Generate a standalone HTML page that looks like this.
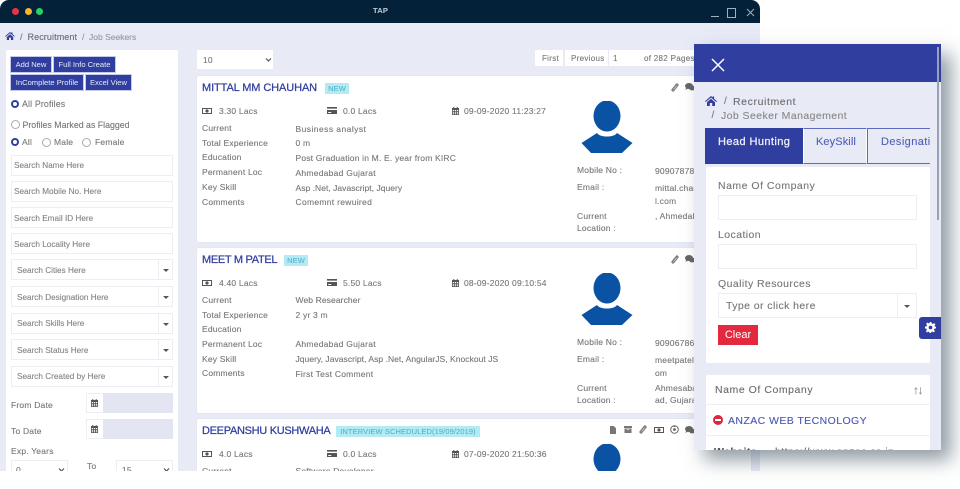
<!DOCTYPE html>
<html><head><meta charset="utf-8"><title>TAP</title>
<style>
html,body{margin:0;padding:0;background:#fff;width:960px;height:489px;overflow:hidden;font-family:"Liberation Sans",sans-serif}
body{filter:blur(.3px)}
.a,.t,.b,svg{position:absolute}
.t{white-space:nowrap;line-height:12px;height:12px;margin-top:-6px;font-size:8.5px;letter-spacing:.2px;color:#777;-webkit-text-stroke:.12px currentColor}
.ph{font-size:8.2px;letter-spacing:0;color:#858585;margin-top:-5.5px}
.d{color:#6d6d6d}
.win{left:0;top:0;width:760px;height:471px;background:#e8eaf6;border-radius:9px 9px 0 0;overflow:hidden}
.bar{left:0;top:0;width:760px;height:23px;background:#03223a}
.btn{background:#303f9f;color:#e8eaf6;font-size:7.6px;text-align:center;line-height:15px;height:15px;position:absolute;white-space:nowrap;box-shadow:0 0 0 1px #c5cae9}
.w{background:#fff;position:absolute}
.in{background:#fff;position:absolute;border:1px solid #eceef4;box-sizing:border-box}
.card{background:#fff;position:absolute;left:197px;width:554px;border-radius:2px;box-shadow:0 0 1px #ccd}
.n{color:#303f9f;font-size:11px;letter-spacing:-.1px;-webkit-text-stroke:.25px #303f9f}
.bd{background:#b2ebf2;position:absolute;height:11px;color:#4fa8cc;font-size:7.5px;line-height:12px;text-align:center;letter-spacing:.1px;white-space:nowrap}
.r{position:absolute;width:7px;height:7px;border-radius:50%;border:1px solid #aaa;background:#fff;box-sizing:content-box}
.r.on{border:2px solid #303f9f;width:4px;height:4px}
.panel{left:694px;top:44px;width:247px;height:406px;background:#e8eaf6;box-shadow:10px 10px 18px rgba(55,75,90,.55);overflow:hidden}
.l{font-size:10.5px;letter-spacing:.42px;color:#777}
.caret{position:absolute;width:0;height:0;border-left:3px solid transparent;border-right:3px solid transparent;border-top:3px solid #555}
</style></head><body>
<svg width="0" height="0" style="position:absolute"><defs>
<symbol id="home" viewBox="0 0 12 10"><path fill="#303f9f" d="M6 0 L7.600 1.400V.5h1.500v2.200L12 5.200l-.7.8L6 1.600.7 6 0 5.200zM2 6.200 6 2.800l4 3.400V10H7.200V7H4.800v3H2z"/></symbol>
<symbol id="cash" viewBox="0 0 10 6"><path fill="#555" fill-rule="evenodd" d="M0 0h10v6H0zM1 1v4h8V1zM5 1.400a1.600 1.600 0 1 1 0 3.200 1.600 1.600 0 0 1 0-3.200z"/></symbol>
<symbol id="ccard" viewBox="0 0 10 7"><path fill="#555" d="M0 0h10v1.600H0zM0 3h10v4H0zM1.200 5v1h3V5z"/></symbol>
<symbol id="cal" viewBox="0 0 7 8"><path fill="#555" d="M0 1h1.300V0h1v1h2.400V0h1v1H7v7H0zM.8 3v1h1.200V3zm2 0v1h1.400V3zm2.200 0v1h1.200V3zM.8 4.700v1h1.200v-1zm2 0v1h1.400v-1zm2.200 0v1h1.200v-1zM.8 6.300v1h1.200v-1zm2 0v1h1.400v-1zm2.200 0v1h1.200v-1z"/></symbol>
<symbol id="clip" viewBox="0 0 8 9"><path fill="none" stroke="#808080" stroke-width="3.200" stroke-linecap="round" d="M2 7 6 2"/><path fill="none" stroke="#ddd" stroke-width=".6" d="M2.600 6.400 5.600 2.800"/></symbol>
<symbol id="chat" viewBox="0 0 10 8"><ellipse cx="4" cy="3" rx="4" ry="3" fill="#666"/><ellipse cx="7" cy="5" rx="3" ry="2.400" fill="#666"/><path fill="#666" d="M1 5 .5 7 3 5.500zM8 6.500 9.500 8 9 6z"/></symbol>
<symbol id="file" viewBox="0 0 6 8"><path fill="#777" d="M0 0h3.800L6 2.200V8H0z"/></symbol>
<symbol id="box" viewBox="0 0 8 7"><path fill="#777" fill-rule="evenodd" d="M0 0h8v2H0zM.5 2.500h7V7h-7zM2.800 3.400v.7h2.400v-.7z"/></symbol>
<symbol id="ball" viewBox="0 0 9 9"><circle cx="4.500" cy="4.500" r="3.800" fill="#fff" stroke="#666" stroke-width="1"/><circle cx="4.500" cy="4.500" r="1.400" fill="#666"/><path fill="#666" d="M3.600 1h1.800v1H3.600zM1 5l1 1.600-.8.3zM8 5 7 6.600l.8.3z"/></symbol>
<symbol id="av" viewBox="0 0 52 52"><ellipse cx="26" cy="15" rx="13.500" ry="15.500" fill="#0a52a3"/><path fill="#0a52a3" d="M.5 42 16 32c2 2.800 6 3.500 10 3.500s8-.7 10-3.500l15.500 10L41 52H10z"/></symbol>
</defs></svg>

<div class="a win">
 <div class="a bar"></div>
 <div class="a" style="left:12px;top:8px;width:7px;height:7px;border-radius:50%;background:#e0364c"></div>
 <div class="a" style="left:25px;top:8px;width:7px;height:7px;border-radius:50%;background:#f6b52e"></div>
 <div class="a" style="left:36px;top:8px;width:7px;height:7px;border-radius:50%;background:#2bd160"></div>
 <div class="t" style="left:373px;top:11px;font-size:7.500px;color:#b8c2cc;font-weight:bold">TAP</div>
 <div class="a" style="left:711px;top:16px;width:8px;height:1px;background:#9fb0bb"></div>
 <div class="a" style="left:727px;top:8px;width:7px;height:8px;border:1px solid #9fb0bb"></div>
 <svg style="left:746px;top:8px" width="9" height="9"><path d="M1 1l7 7M8 1L1 8" stroke="#9fb0bb" stroke-width="1"/></svg>

 <svg style="left:5px;top:32px" width="10" height="8"><use href="#home"/></svg>
 <div class="t" style="left:20px;top:36.500px;font-size:9px">/</div>
 <div class="t d" style="left:27.500px;top:36.500px;font-size:9px;letter-spacing:.1px">Recruitment</div>
 <div class="t" style="left:82px;top:36.500px;font-size:9px;color:#999">/</div>
 <div class="t" style="left:89px;top:36.500px;font-size:8.500px;color:#999;letter-spacing:0">Job Seekers</div>

 <!-- sidebar -->
 <div class="w" style="left:6px;top:50px;width:172px;height:430px;border-radius:2px"></div>
 <div class="btn" style="left:11px;top:57px;width:40px">Add New</div>
 <div class="btn" style="left:54px;top:57px;width:61px">Full Info Create</div>
 <div class="btn" style="left:11px;top:75px;width:72px">InComplete Profile</div>
 <div class="btn" style="left:86px;top:75px;width:45px">Excel View</div>

 <div class="r on" style="left:11px;top:100px"></div><div class="t" style="left:22px;top:104px;letter-spacing:.15px;font-size:8.800px">All Profiles</div>
 <div class="r" style="left:11px;top:120px"></div><div class="t" style="left:22.500px;top:124.500px;letter-spacing:0;font-size:8.800px">Profiles Marked as Flagged</div>
 <div class="r on" style="left:11px;top:138px"></div><div class="t" style="left:22px;top:142px">All</div>
 <div class="r" style="left:42px;top:138px"></div><div class="t" style="left:54px;top:142px">Male</div>
 <div class="r" style="left:82px;top:138px"></div><div class="t" style="left:95px;top:142px">Female</div>

 <div class="in" style="left:11px;top:155px;width:162px;height:20.500px"></div><div class="t ph" style="left:14px;top:165.500px">Search Name Here</div>
 <div class="in" style="left:11px;top:181px;width:162px;height:20.500px"></div><div class="t ph" style="left:14px;top:191.500px">Search Mobile No. Here</div>
 <div class="in" style="left:11px;top:207px;width:162px;height:20.500px"></div><div class="t ph" style="left:14px;top:218px">Search Email ID Here</div>
 <div class="in" style="left:11px;top:233px;width:162px;height:20.500px"></div><div class="t ph" style="left:14px;top:244px">Search Locality Here</div>

 <div class="in" style="left:11px;top:259px;width:162px;height:21px"></div><div class="a" style="left:158px;top:260px;width:1px;height:19px;background:#eceef4"></div><div class="caret" style="left:162.500px;top:269px"></div><div class="t ph" style="left:17px;top:270px">Search Cities Here</div>
 <div class="in" style="left:11px;top:286px;width:162px;height:21px"></div><div class="a" style="left:158px;top:287px;width:1px;height:19px;background:#eceef4"></div><div class="caret" style="left:162.500px;top:296px"></div><div class="t ph" style="left:17px;top:297px">Search Designation Here</div>
 <div class="in" style="left:11px;top:313px;width:162px;height:21px"></div><div class="a" style="left:158px;top:314px;width:1px;height:19px;background:#eceef4"></div><div class="caret" style="left:162.500px;top:323px"></div><div class="t ph" style="left:17px;top:323.500px">Search Skills Here</div>
 <div class="in" style="left:11px;top:339px;width:162px;height:21px"></div><div class="a" style="left:158px;top:340px;width:1px;height:19px;background:#eceef4"></div><div class="caret" style="left:162.500px;top:349px"></div><div class="t ph" style="left:17px;top:350px">Search Status Here</div>
 <div class="in" style="left:11px;top:366px;width:162px;height:21px"></div><div class="a" style="left:158px;top:367px;width:1px;height:19px;background:#eceef4"></div><div class="caret" style="left:162.500px;top:376px"></div><div class="t ph" style="left:17px;top:376.500px">Search Created by Here</div>

 <div class="t" style="left:11px;top:405px">From Date</div>
 <div class="in" style="left:86px;top:393px;width:18px;height:20px"></div><svg style="left:91px;top:399px" width="7" height="8"><use href="#cal"/></svg><div class="a" style="left:103px;top:393px;width:70px;height:20px;background:#e3e5f3"></div>
 <div class="t" style="left:11px;top:431px">To Date</div>
 <div class="in" style="left:86px;top:419px;width:18px;height:20px"></div><svg style="left:91px;top:425px" width="7" height="8"><use href="#cal"/></svg><div class="a" style="left:103px;top:419px;width:70px;height:20px;background:#e3e5f3"></div>
 <div class="t" style="left:11px;top:451px">Exp. Years</div>
 <div class="in" style="left:11px;top:460px;width:57px;height:20px"></div><div class="t" style="left:16px;top:470px">0</div>
 <svg style="left:58px;top:468px" width="7" height="4"><path d="M1 .5l2.500 2.500L6 .5" fill="none" stroke="#555" stroke-width="1.200"/></svg>
 <div class="t" style="left:87px;top:466px">To</div>
 <div class="in" style="left:116px;top:460px;width:57px;height:20px"></div><div class="t" style="left:122px;top:470px">15</div>
 <svg style="left:163px;top:468px" width="7" height="4"><path d="M1 .5l2.500 2.500L6 .5" fill="none" stroke="#555" stroke-width="1.200"/></svg>

 <!-- top controls -->
 <div class="w" style="left:197px;top:50px;width:76px;height:19px"></div>
 <div class="t" style="left:203px;top:60px">10</div>
 <svg style="left:265px;top:58px" width="7" height="4"><path d="M1 .5l2.500 2.500L6 .5" fill="none" stroke="#555" stroke-width="1.200"/></svg>
 <div class="w" style="left:535px;top:50px;width:28px;height:16px;border-radius:2px 0 0 2px"></div><div class="t" style="left:542px;top:59px;font-size:8px;letter-spacing:.3px">First</div>
 <div class="w" style="left:565px;top:50px;width:43px;height:16px"></div><div class="t" style="left:571px;top:59px;font-size:8px;letter-spacing:.3px">Previous</div>
 <div class="w" style="left:609px;top:50px;width:90px;height:16px"></div><div class="t" style="left:613px;top:59px;font-size:8px">1</div><div class="t" style="left:644px;top:59px;font-size:8px;letter-spacing:.3px">of 282 Pages</div>

 <!-- card 1 -->
 <div class="card" style="top:76px;height:166px"></div>
 <div class="t n" style="left:202px;top:88px">MITTAL MM CHAUHAN</div>
 <div class="bd" style="left:325px;top:83px;width:24px">NEW</div>
 <svg style="left:671px;top:83px" width="8" height="9"><use href="#clip"/></svg><svg style="left:685px;top:83px" width="10" height="8"><use href="#chat"/></svg>
 <svg style="left:202px;top:108px" width="10" height="6"><use href="#cash"/></svg><div class="t" style="left:219px;top:111px">3.30 Lacs</div>
 <svg style="left:327px;top:107px" width="10" height="7"><use href="#ccard"/></svg><div class="t" style="left:343px;top:111px">0.0 Lacs</div>
 <svg style="left:452px;top:107px" width="7" height="8"><use href="#cal"/></svg><div class="t" style="left:464px;top:111px">09-09-2020 11:23:27</div>
 <div class="t" style="left:202px;top:128px">Current</div><div class="t" style="left:295.500px;top:128.500px;letter-spacing:.44px">Business analyst</div>
 <div class="t" style="left:202px;top:143px">Total Experience</div><div class="t" style="left:295.500px;top:143px">0 m</div>
 <div class="t" style="left:202px;top:157px">Education</div><div class="t" style="left:295.500px;top:158px;letter-spacing:.18px">Post Graduation in M. E. year from KIRC</div>
 <div class="t" style="left:202px;top:172px">Permanent Loc</div><div class="t" style="left:295.500px;top:172.500px;letter-spacing:.25px">Ahmedabad Gujarat</div>
 <div class="t" style="left:202px;top:187px">Key Skill</div><div class="t" style="left:295.500px;top:187.500px;letter-spacing:.03px">Asp .Net, Javascript, Jquery</div>
 <div class="t" style="left:202px;top:201.500px">Comments</div><div class="t" style="left:295.500px;top:202px;letter-spacing:.3px">Comemnt rewuired</div>
 <svg style="left:581px;top:101px" width="52" height="52"><use href="#av"/></svg>
 <div class="t" style="left:577px;top:170px">Mobile No :</div><div class="t" style="left:655px;top:170.500px">9090787800</div>
 <div class="t" style="left:577px;top:187px">Email :</div><div class="t" style="left:655px;top:188px">mittal.chauhan@gmai</div><div class="t" style="left:655px;top:201px">l.com</div>
 <div class="t" style="left:577px;top:216px">Current</div><div class="t" style="left:577px;top:228px">Location :</div><div class="t" style="left:655px;top:216px">, Ahmedabad</div>

 <!-- card 2 -->
 <div class="card" style="top:248px;height:165px"></div>
 <div class="t n" style="left:202px;top:260px;letter-spacing:-.3px">MEET M PATEL</div>
 <div class="bd" style="left:284px;top:255px;width:24px">NEW</div>
 <svg style="left:671px;top:255px" width="8" height="9"><use href="#clip"/></svg><svg style="left:685px;top:255px" width="10" height="8"><use href="#chat"/></svg>
 <svg style="left:202px;top:280px" width="10" height="6"><use href="#cash"/></svg><div class="t" style="left:219px;top:283px">4.40 Lacs</div>
 <svg style="left:327px;top:279px" width="10" height="7"><use href="#ccard"/></svg><div class="t" style="left:343px;top:283px">5.50 Lacs</div>
 <svg style="left:452px;top:279px" width="7" height="8"><use href="#cal"/></svg><div class="t" style="left:464px;top:283px">08-09-2020 09:10:54</div>
 <div class="t" style="left:202px;top:300px">Current</div><div class="t" style="left:295.500px;top:300px;letter-spacing:.1px">Web Researcher</div>
 <div class="t" style="left:202px;top:314.500px">Total Experience</div><div class="t" style="left:295.500px;top:315px">2 yr 3 m</div>
 <div class="t" style="left:202px;top:329px">Education</div>
 <div class="t" style="left:202px;top:344px">Permanent Loc</div><div class="t" style="left:295.500px;top:344px;letter-spacing:.25px">Ahmedabad Gujarat</div>
 <div class="t" style="left:202px;top:358.500px">Key Skill</div><div class="t" style="left:295.500px;top:359px;letter-spacing:.04px">Jquery, Javascript, Asp .Net, AngularJS, Knockout JS</div>
 <div class="t" style="left:202px;top:373px">Comments</div><div class="t" style="left:295.500px;top:373.500px;letter-spacing:.24px">First Test Comment</div>
 <svg style="left:581px;top:273px" width="52" height="52"><use href="#av"/></svg>
 <div class="t" style="left:577px;top:342px">Mobile No :</div><div class="t" style="left:655px;top:342.500px">9090678600</div>
 <div class="t" style="left:577px;top:359px">Email :</div><div class="t" style="left:655px;top:360px">meetpatel@gmail.c</div><div class="t" style="left:655px;top:373px">om</div>
 <div class="t" style="left:577px;top:388px">Current</div><div class="t" style="left:577px;top:400px">Location :</div><div class="t" style="left:655px;top:388px">Ahmesabad</div><div class="t" style="left:655px;top:400px">ad, Gujarat</div>

 <!-- card 3 -->
 <div class="card" style="top:419px;height:60px"></div>
 <div class="t n" style="left:202px;top:431px;letter-spacing:-.3px">DEEPANSHU KUSHWAHA</div>
 <div class="bd" style="left:336px;top:426px;width:144px">INTERVIEW SCHEDULED(19/09/2019)</div>
 <svg style="left:610px;top:426px" width="6" height="8"><use href="#file"/></svg><svg style="left:624px;top:426px" width="8" height="7"><use href="#box"/></svg><svg style="left:639px;top:425px" width="8" height="9"><use href="#clip"/></svg><svg style="left:654px;top:427px" width="10" height="6"><use href="#cash"/></svg><svg style="left:670px;top:425px" width="9" height="9"><use href="#ball"/></svg><svg style="left:685px;top:426px" width="10" height="8"><use href="#chat"/></svg>
 <svg style="left:202px;top:451px" width="10" height="6"><use href="#cash"/></svg><div class="t" style="left:219px;top:454px">4.0 Lacs</div>
 <svg style="left:327px;top:450px" width="10" height="7"><use href="#ccard"/></svg><div class="t" style="left:343px;top:454px">0.0 Lacs</div>
 <svg style="left:452px;top:450px" width="7" height="8"><use href="#cal"/></svg><div class="t" style="left:464px;top:454px">07-09-2020 21:50:36</div>
 <div class="t" style="left:202px;top:470.500px">Current</div><div class="t" style="left:295.500px;top:471px">Software Developer</div>
 <svg style="left:581px;top:444px" width="52" height="52"><use href="#av"/></svg>
</div>

<!-- panel -->
<div class="a panel">
 <div class="a" style="left:0;top:0;width:247px;height:38px;background:#303f9f"></div>
 <svg style="left:17px;top:14px" width="14" height="14"><path d="M1 1l12 12M13 1L1 13" stroke="#fff" stroke-width="1.500"/></svg>
 <svg style="left:11px;top:52px" width="12" height="10"><use href="#home"/></svg>
 <div class="t" style="left:30px;top:57.500px;font-size:10px">/</div>
 <div class="t l" style="left:39px;top:57.500px;color:#6d6d6d;letter-spacing:.6px">Recruitment</div>
 <div class="t" style="left:17.500px;top:71.500px;font-size:10px">/</div>
 <div class="t l" style="left:27px;top:71.500px;color:#888;letter-spacing:.42px">Job Seeker Management</div>

 <div class="a" style="left:11px;top:84px;width:225px;height:36px;box-sizing:border-box;border-top:1px solid #5c6bc0;border-bottom:1px solid #5c6bc0"></div>
 <div class="a" style="left:11px;top:84px;width:98px;height:36px;background:#303f9f"></div>
 <div class="a" style="left:172.500px;top:84px;width:1px;height:36px;background:#5c6bc0"></div>
 <div class="t" style="left:24px;top:98px;font-size:11px;color:#f0f1fa;letter-spacing:.42px;-webkit-text-stroke:.25px #f0f1fa">Head Hunting</div>
 <div class="a" style="left:109px;top:84px;width:64px;height:36px;box-sizing:border-box;border:1px solid #fff;border-width:1px 1px;border-top-color:#5c6bc0;border-bottom-color:#5c6bc0"></div>
 <div class="t" style="left:122px;top:98px;font-size:11px;color:#5160b8;letter-spacing:.1px">KeySkill</div>
 <div class="t" style="left:187px;top:98px;font-size:11px;color:#5160b8;letter-spacing:.42px;width:49px;overflow:hidden">Designation</div>

 <div class="w" style="left:12px;top:123px;width:224px;height:196px;border-radius:2px"></div>
 <div class="t l" style="left:24px;top:141.500px;letter-spacing:.5px">Name Of Company</div>
 <div class="in" style="left:24px;top:151px;width:199px;height:25px"></div>
 <div class="t l" style="left:24px;top:190.500px">Location</div>
 <div class="in" style="left:24px;top:200px;width:199px;height:25px"></div>
 <div class="t l" style="left:24px;top:239.500px">Quality Resources</div>
 <div class="in" style="left:24px;top:249px;width:199px;height:25px"></div>
 <div class="a" style="left:203px;top:250px;width:1px;height:23px;background:#eceef4"></div>
 <div class="caret" style="left:210px;top:261px"></div>
 <div class="t l" style="left:32px;top:261.500px">Type or click here</div>
 <div class="a" style="left:24px;top:281px;width:40px;height:20px;background:#e3293f;color:#fff;font-size:11px;text-align:center;line-height:21px">Clear</div>

 <div class="w" style="left:12px;top:331px;width:224px;height:90px;border-radius:2px"></div>
 <div class="a" style="left:12px;top:360px;width:224px;height:1px;background:#eceef4"></div>
 <div class="a" style="left:12px;top:391px;width:224px;height:1px;background:#eceef4"></div>
 <div class="t l" style="left:21px;top:346px;color:#6d6d6d;letter-spacing:.55px">Name Of Company</div>
 <div class="t" style="left:219px;top:345.500px;font-size:12px;color:#888;letter-spacing:-1.500px">↑↓</div>
 <div class="a" style="left:19px;top:371px;width:10px;height:10px;border-radius:50%;background:#d8283c"></div>
 <div class="a" style="left:21px;top:375px;width:6px;height:2px;background:#fff"></div>
 <div class="t l" style="left:34px;top:376.500px;color:#4a58b4;letter-spacing:.42px">ANZAC WEB TECNOLOGY</div>
 <div class="t l" style="left:20px;top:408px;color:#555;font-weight:bold">Website</div>
 <div class="t l" style="left:81px;top:408px;color:#666">https://www.anzac.co.in</div>

 <div class="a" style="left:243px;top:3px;width:2px;height:173px;background:#9aa0b8"></div>
</div>
<div class="a" style="left:919px;top:317px;width:22px;height:22px;background:#303f9f;border-radius:3px 0 0 3px"></div>
<svg style="left:925px;top:322px" width="11" height="11" viewBox="0 0 12 12"><path fill="#fff" fill-rule="evenodd" d="M5 0h2l.3 1.700 1.200.5L10 1.200l1.400 1.400-1 1.400.5 1.200L12 5v2l-1.700.3-.5 1.200 1 1.500L9.400 11.400 8 10.400l-1.200.5L6.500 12h-1.500l-.3-1.100-1.200-.5-1.500 1L1.100 10l1-1.500-.5-1.200L0 7V5l1.700-.3.5-1.200-1-1.500L2.600.6l1.500 1 1.200-.5zM6 4a2 2 0 1 0 0 4 2 2 0 0 0 0-4z"/></svg>
</body></html>
